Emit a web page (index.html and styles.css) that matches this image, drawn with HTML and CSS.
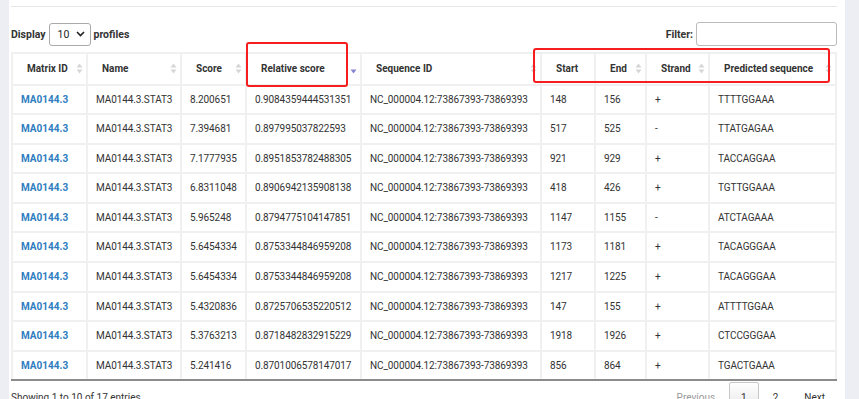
FILE: index.html
```html
<!DOCTYPE html>
<html>
<head>
<meta charset="utf-8">
<link rel="stylesheet" href="styles.css">
</head>
<body>
<div class="panel">
  <div class="rule"></div>
  <div class="controls">
    <div class="length">
      <span class="lbl">Display</span>
      <span class="select"><span>10</span><svg width="9" height="6" viewBox="0 0 9 6"><path d="M1 1 L4.5 4.5 L8 1" fill="none" stroke="#222" stroke-width="1.6"/></svg></span>
      <span class="lbl">profiles</span>
    </div>
    <div class="filter">
      <span class="lbl">Filter:</span>
      <span class="input"></span>
    </div>
  </div>
  <table class="grid">
    <colgroup>
      <col style="width:75px"><col style="width:94px"><col style="width:65px"><col style="width:115px"><col style="width:180px"><col style="width:54px"><col style="width:51px"><col style="width:63px"><col style="width:127px">
    </colgroup>
    <thead>
      <tr>
        <th><div class="th-in"><span>Matrix ID</span><svg class="sort" width="7" height="11" viewBox="0 0 7 11"><path d="M0.5 4.5 L3.5 0.5 L6.5 4.5Z M0.5 6.5 L3.5 10.5 L6.5 6.5Z"/></svg></div></th>
        <th><div class="th-in"><span>Name</span><svg class="sort" width="7" height="11" viewBox="0 0 7 11"><path d="M0.5 4.5 L3.5 0.5 L6.5 4.5Z M0.5 6.5 L3.5 10.5 L6.5 6.5Z"/></svg></div></th>
        <th><div class="th-in"><span>Score</span><svg class="sort" width="7" height="11" viewBox="0 0 7 11"><path d="M0.5 4.5 L3.5 0.5 L6.5 4.5Z M0.5 6.5 L3.5 10.5 L6.5 6.5Z"/></svg></div></th>
        <th><div class="th-in"><span>Relative score</span><svg class="sort active" width="7" height="11" viewBox="0 0 7 11"><path d="M0.5 6.5 L3.5 10.5 L6.5 6.5Z"/></svg></div></th>
        <th><div class="th-in"><span>Sequence ID</span><svg class="sort" width="7" height="11" viewBox="0 0 7 11"><path d="M0.5 4.5 L3.5 0.5 L6.5 4.5Z M0.5 6.5 L3.5 10.5 L6.5 6.5Z"/></svg></div></th>
        <th><div class="th-in"><span>Start</span></div></th>
        <th><div class="th-in"><span>End</span><svg class="sort" width="7" height="11" viewBox="0 0 7 11"><path d="M0.5 4.5 L3.5 0.5 L6.5 4.5Z M0.5 6.5 L3.5 10.5 L6.5 6.5Z"/></svg></div></th>
        <th><div class="th-in"><span>Strand</span><svg class="sort" width="7" height="11" viewBox="0 0 7 11"><path d="M0.5 4.5 L3.5 0.5 L6.5 4.5Z M0.5 6.5 L3.5 10.5 L6.5 6.5Z"/></svg></div></th>
        <th><div class="th-in"><span>Predicted sequence</span><svg class="sort" width="7" height="11" viewBox="0 0 7 11"><path d="M0.5 4.5 L3.5 0.5 L6.5 4.5Z M0.5 6.5 L3.5 10.5 L6.5 6.5Z"/></svg></div></th>
      </tr>
    </thead>
    <tbody>
      <tr><td><a class="link">MA0144.3</a></td><td>MA0144.3.STAT3</td><td>8.200651</td><td>0.9084359444531351</td><td>NC_000004.12:73867393-73869393</td><td>148</td><td>156</td><td>+</td><td>TTTTGGAAA</td></tr>
      <tr><td><a class="link">MA0144.3</a></td><td>MA0144.3.STAT3</td><td>7.394681</td><td>0.897995037822593</td><td>NC_000004.12:73867393-73869393</td><td>517</td><td>525</td><td>-</td><td>TTATGAGAA</td></tr>
      <tr><td><a class="link">MA0144.3</a></td><td>MA0144.3.STAT3</td><td>7.1777935</td><td>0.8951853782488305</td><td>NC_000004.12:73867393-73869393</td><td>921</td><td>929</td><td>+</td><td>TACCAGGAA</td></tr>
      <tr><td><a class="link">MA0144.3</a></td><td>MA0144.3.STAT3</td><td>6.8311048</td><td>0.8906942135908138</td><td>NC_000004.12:73867393-73869393</td><td>418</td><td>426</td><td>+</td><td>TGTTGGAAA</td></tr>
      <tr><td><a class="link">MA0144.3</a></td><td>MA0144.3.STAT3</td><td>5.965248</td><td>0.8794775104147851</td><td>NC_000004.12:73867393-73869393</td><td>1147</td><td>1155</td><td>-</td><td>ATCTAGAAA</td></tr>
      <tr><td><a class="link">MA0144.3</a></td><td>MA0144.3.STAT3</td><td>5.6454334</td><td>0.8753344846959208</td><td>NC_000004.12:73867393-73869393</td><td>1173</td><td>1181</td><td>+</td><td>TACAGGGAA</td></tr>
      <tr><td><a class="link">MA0144.3</a></td><td>MA0144.3.STAT3</td><td>5.6454334</td><td>0.8753344846959208</td><td>NC_000004.12:73867393-73869393</td><td>1217</td><td>1225</td><td>+</td><td>TACAGGGAA</td></tr>
      <tr><td><a class="link">MA0144.3</a></td><td>MA0144.3.STAT3</td><td>5.4320836</td><td>0.8725706535220512</td><td>NC_000004.12:73867393-73869393</td><td>147</td><td>155</td><td>+</td><td>ATTTTGGAA</td></tr>
      <tr><td><a class="link">MA0144.3</a></td><td>MA0144.3.STAT3</td><td>5.3763213</td><td>0.8718482832915229</td><td>NC_000004.12:73867393-73869393</td><td>1918</td><td>1926</td><td>+</td><td>CTCCGGGAA</td></tr>
      <tr class="last"><td><a class="link">MA0144.3</a></td><td>MA0144.3.STAT3</td><td>5.241416</td><td>0.8701006578147017</td><td>NC_000004.12:73867393-73869393</td><td>856</td><td>864</td><td>+</td><td>TGACTGAAA</td></tr>
    </tbody>
  </table>
  <div class="footer">
    <div class="info">Showing 1 to 10 of 17 entries</div>
    <div class="pager">
      <span class="pg disabled">Previous</span>
      <span class="pg current">1</span>
      <span class="pg">2</span>
      <span class="pg">Next</span>
    </div>
  </div>
  <div class="mark mark-a"></div>
  <div class="mark mark-b"></div>
</div>
</body>
</html>
```
FILE: styles.css
```css
html, body {
  margin: 0;
  height: 100%;
}
body {
  background: #eceef3;
  font-family: "Roboto", "Liberation Sans", sans-serif;
  font-size: 10px;
  color: #333;
  overflow: hidden;
}
.panel {
  position: relative;
  margin-left: 9px;
  width: 836px;
  height: 399px;
  box-sizing: border-box;
  padding: 6px 8px 0 2px;
  background: #fff;
}
.rule {
  border-top: 1px solid #e6e6e6;
}
.controls {
  margin-top: 15px;
  height: 24px;
  display: flex;
  justify-content: space-between;
  align-items: center;
}
.length, .filter {
  display: flex;
  align-items: center;
}
.lbl {
  font-size: 10.5px;
  font-weight: bold;
  color: #333;
}
.select {
  box-sizing: border-box;
  width: 42px;
  height: 23px;
  margin: 0 3px 0 3px;
  border: 1px solid #aaa;
  border-radius: 3px;
  display: flex;
  align-items: center;
  justify-content: space-between;
  padding: 0 5px 0 8px;
  color: #222;
  font-size: 10.5px;
}
.input {
  box-sizing: border-box;
  width: 141px;
  height: 24px;
  margin-left: 3px;
  border: 1px solid #bbb;
  border-radius: 3px;
}
.grid {
  margin-top: 6px;
  width: 824px;
  table-layout: fixed;
  border-collapse: collapse;
}
.grid th, .grid td {
  border: 2px solid #f0f0f0;
  text-align: left;
}
.grid th {
  padding: 7px 3px 7px 14px;
  line-height: 15.5px;
  font-weight: bold;
  color: #333;
}
.th-in {
  display: flex;
  align-items: center;
  justify-content: space-between;
}
.sort {
  fill: #d6d6d6;
  flex: none;
}
.sort.active {
  fill: #8585d6;
}
.grid td {
  padding: 6px 4px 6px 8px;
  line-height: 15.6px;
  color: #333;
  letter-spacing: -0.1px;
  white-space: nowrap;
}
.grid tr.last td {
  border-bottom: 2px solid #8c8c8c;
}
.link {
  color: #2f7dc0;
  font-weight: bold;
  text-decoration: none;
  letter-spacing: 0;
}
.footer {
  display: flex;
  justify-content: space-between;
  align-items: flex-start;
}
.info {
  padding-top: 8px;
  line-height: 18px;
  font-size: 10px;
}
.pager {
  display: flex;
  padding-top: 1px;
  font-size: 10px;
}
.pg {
  padding: 7px 11px;
  line-height: 16px;
  color: #333;
  border: 1px solid transparent;
  border-radius: 2px;
  margin-left: 2px;
}
.pg.disabled {
  color: #999;
}
.pg.current {
  border-color: #c8c8c8;
  background: linear-gradient(#ffffff, #e4e4e4);
}
.mark {
  position: absolute;
  border: 2px solid #f51d1d;
  border-radius: 3px;
  box-sizing: border-box;
}
.mark-a {
  left: 237px;
  top: 42px;
  width: 102px;
  height: 45px;
}
.mark-b {
  left: 524px;
  top: 48px;
  width: 297px;
  height: 35px;
}
```
